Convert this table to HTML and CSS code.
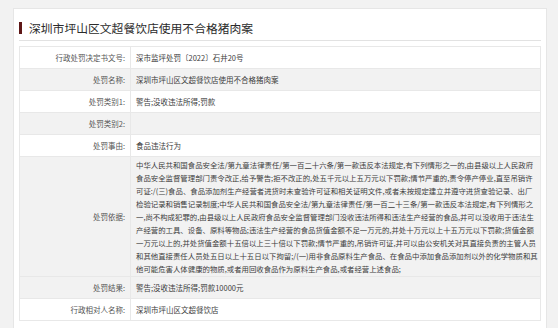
FILE: index.html
```html
<!DOCTYPE html>
<html lang="zh-CN">
<head>
  <meta charset="UTF-8">
  <title>处罚详情</title>
  <link rel="stylesheet" href="styles.css">
</head>
<body>
  <div class="card">
    <!-- 标题 -->
    <div class="head">
      <h1 class="title">深圳市坪山区文超餐饮店使用不合格猪肉案</h1>
    </div>
    <!-- 处罚信息 -->
    <table class="info-table">
      <tr>
        <th>行政处罚决定书文号:</th>
        <td>深市监坪处罚〔2022〕石井20号</td>
      </tr>
      <tr class="gray">
        <th>处罚名称:</th>
        <td>深圳市坪山区文超餐饮店使用不合格猪肉案</td>
      </tr>
      <tr>
        <th>处罚类别1:</th>
        <td>警告;没收违法所得;罚款</td>
      </tr>
      <tr class="gray">
        <th>处罚类别2:</th>
        <td></td>
      </tr>
      <tr>
        <th>处罚事由:</th>
        <td>食品违法行为</td>
      </tr>
      <tr class="gray">
        <th>处罚依据:</th>
        <td class="long">中华人民共和国食品安全法/第九章法律责任/第一百二十六条/第一款违反本法规定,有下列情形之一的,由县级以上人民政府<br>食品安全监督管理部门责令改正,给予警告;拒不改正的,处五千元以上五万元以下罚款;情节严重的,责令停产停业,直至吊销许<br>可证:/(三)食品、食品添加剂生产经营者进货时未查验许可证和相关证明文件,或者未按规定建立并遵守进货查验记录、出厂<br>检验记录和销售记录制度;中华人民共和国食品安全法/第九章法律责任/第一百二十三条/第一款违反本法规定,有下列情形之<br>一,尚不构成犯罪的,由县级以上人民政府食品安全监督管理部门没收违法所得和违法生产经营的食品,并可以没收用于违法生<br>产经营的工具、设备、原料等物品;违法生产经营的食品货值金额不足一万元的,并处十万元以上十五万元以下罚款;货值金额<br>一万元以上的,并处货值金额十五倍以上三十倍以下罚款;情节严重的,吊销许可证,并可以由公安机关对其直接负责的主管人员<br>和其他直接责任人员处五日以上十五日以下拘留;/(一)用非食品原料生产食品、在食品中添加食品添加剂以外的化学物质和其<br>他可能危害人体健康的物质,或者用回收食品作为原料生产食品,或者经营上述食品;</td>
      </tr>
      <tr class="gray">
        <th>处罚结果:</th>
        <td>警告;没收违法所得;罚款10000元</td>
      </tr>
      <tr>
        <th>行政相对人名称:</th>
        <td>深圳市坪山区文超餐饮店</td>
      </tr>
    </table>
  </div>
</body>
</html>
```

FILE: styles.css
```css
body { background:#f2f2f2; font-family:"Noto Sans CJK SC", "Noto Sans", sans-serif; margin:0; padding:8px 11px 0 13px;}
.card { background:#fff; border:1px solid #e6e6e6; border-bottom:0; padding:0 5px 20px 5px;}
.head { padding:13px 0 6px 0; border-bottom:1px solid #e2e2e2; margin-bottom:5px;}
.title { margin:0; font-size:11.8px; line-height:12px; font-weight:400; color:#2b2b2b; border-left:3px solid #5e1717; padding-left:7px;}
.info-table { width:100%; table-layout:fixed; border-collapse:collapse; border:1px solid #e8e8e8; font-size:7.5px;}
.info-table th, .info-table td { border-bottom:1px solid #e8e8e8; padding:4px 5px; line-height:13px; vertical-align:middle;}
.info-table th { width:100px; text-align:right; font-weight:400; color:#555; border-right:1px solid #e8e8e8;}
.info-table td { text-align:left; color:#3c3c3c; padding-right:2px;}
.info-table td.long { padding-top:1px; padding-bottom:1px; font-size:7.4px; white-space:nowrap;}
.info-table tr.gray { background:#f2f2f2;}
```
